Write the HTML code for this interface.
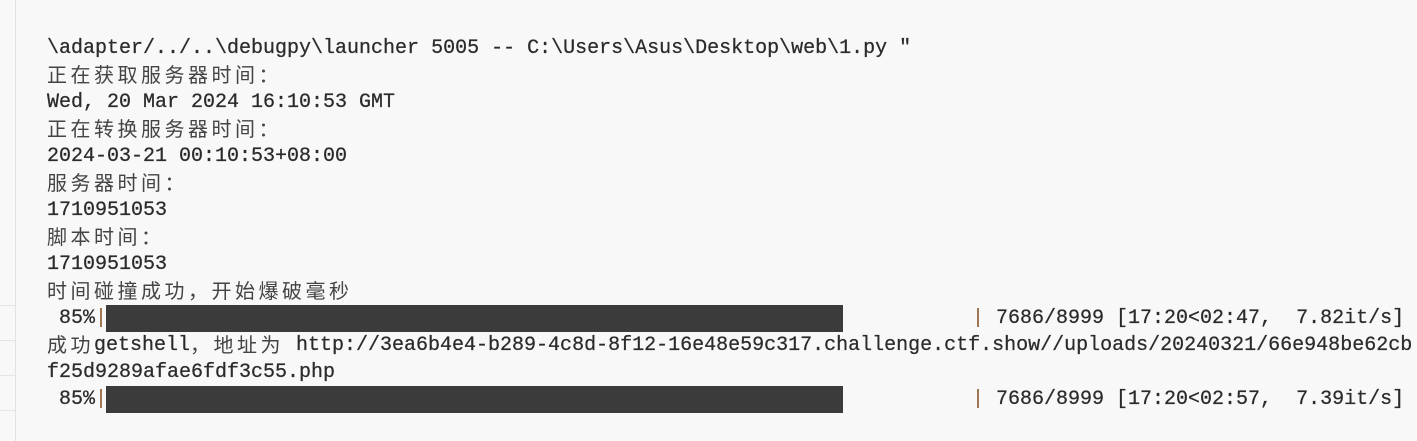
<!DOCTYPE html>
<html><head><meta charset="utf-8"><style>
body{margin:0;width:1417px;height:441px;background:#f8f8f8;position:relative;overflow:hidden;font-family:"Liberation Mono","Noto Sans CJK SC",monospace;font-size:20px;color:#2b2b2b;-webkit-text-stroke:0.25px #2b2b2b}
.vl{position:absolute;left:15px;top:0;width:1px;height:441px;background:#e2e2e2}
.hl{position:absolute;left:0;width:15px;height:1px;background:#e6e6e6}
.l{position:absolute;left:47px;white-space:pre;line-height:27px;height:27px}
.c{font-family:"Noto Sans CJK SC",sans-serif;font-size:20px;letter-spacing:3.5px;color:#444;-webkit-text-stroke:0;display:inline-block;line-height:27px;vertical-align:top;position:relative;top:-2px}
.bar{position:absolute;left:106px;width:737px;height:27px;background:#3b3b3b}
.p{color:#8a5a2c;-webkit-text-stroke:0}
</style></head><body>
<div class="vl"></div>
<div class="hl" style="top:305px"></div><div class="hl" style="top:340px"></div><div class="hl" style="top:375px"></div><div class="hl" style="top:410px"></div>
<div class="l" style="top:35px">\adapter/../..\debugpy\launcher 5005 -- C:\Users\Asus\Desktop\web\1.py "</div>
<div class="l" style="top:62px"><span class="c">正在获取服务器时间：</span></div>
<div class="l" style="top:89px">Wed, 20 Mar 2024 16:10:53 GMT</div>
<div class="l" style="top:116px"><span class="c">正在转换服务器时间：</span></div>
<div class="l" style="top:143px">2024-03-21 00:10:53+08:00</div>
<div class="l" style="top:170px"><span class="c">服务器时间：</span></div>
<div class="l" style="top:197px">1710951053</div>
<div class="l" style="top:224px"><span class="c">脚本时间：</span></div>
<div class="l" style="top:251px">1710951053</div>
<div class="l" style="top:278px"><span class="c">时间碰撞成功，开始爆破毫秒</span></div>
<div class="l" style="top:305px"> 85%<span class="p">|</span></div>
<div class="bar" style="top:305px"></div>
<div class="l" style="top:305px;left:972px"><span class="p">|</span> 7686/8999 [17:20&lt;02:47,  7.82it/s]</div>
<div class="l" style="top:332px"><span class="c">成功</span>getshell<span class="c">，地址为</span> http://3ea6b4e4-b289-4c8d-8f12-16e48e59c317.challenge.ctf.show//uploads/20240321/66e948be62cb</div>
<div class="l" style="top:359px">f25d9289afae6fdf3c55.php</div>
<div class="l" style="top:386px"> 85%<span class="p">|</span></div>
<div class="bar" style="top:386px"></div>
<div class="l" style="top:386px;left:972px"><span class="p">|</span> 7686/8999 [17:20&lt;02:57,  7.39it/s]</div>
</body></html>
